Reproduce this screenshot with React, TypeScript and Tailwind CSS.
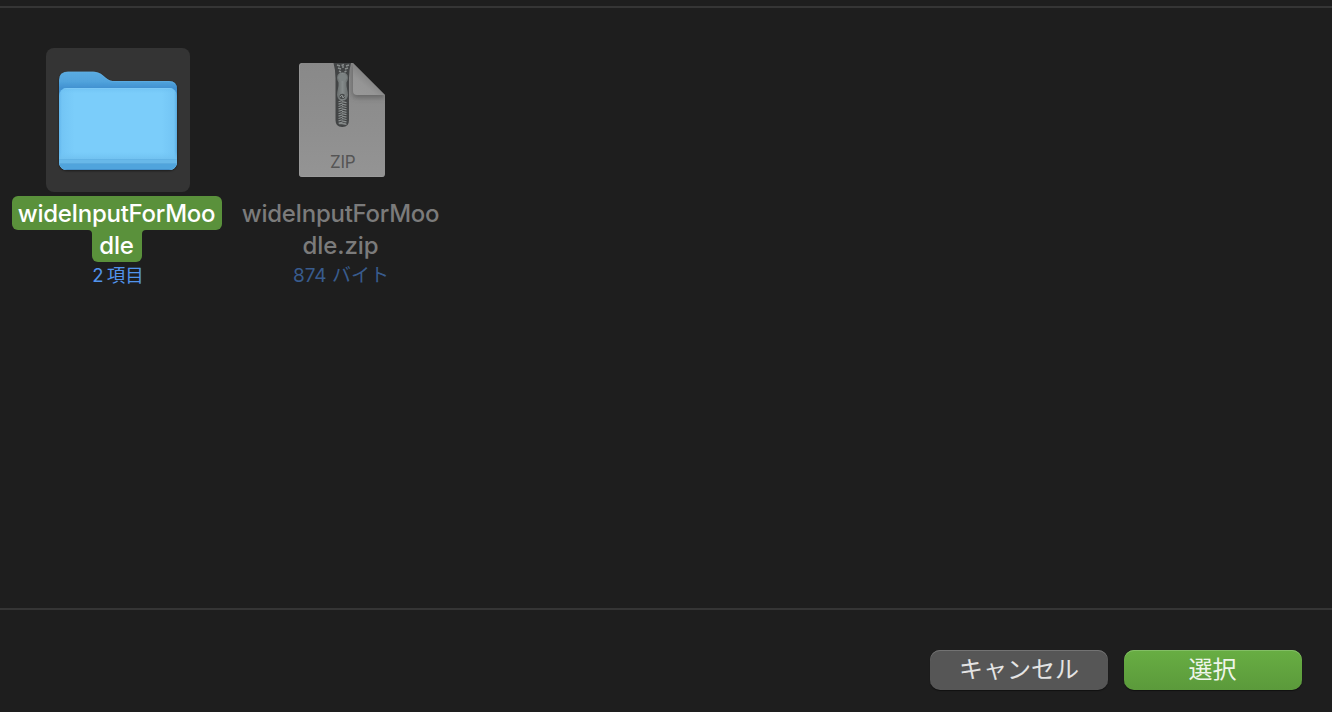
const teeth = Array.from({ length: 10 }, (_, i) => 52.5 + i * 2.4);

function FolderIcon() {
  return (
    <svg width="144" height="144" viewBox="0 0 144 144" className="block" aria-hidden="true">
      <defs>
        <linearGradient id="folderBack" x1="0" y1="23" x2="0" y2="44" gradientUnits="userSpaceOnUse">
          <stop offset="0" stopColor="#5bace1" />
          <stop offset="0.5" stopColor="#51a3dc" />
          <stop offset="0.8" stopColor="#4292d1" />
          <stop offset="1" stopColor="#4292d1" />
        </linearGradient>
        <linearGradient id="folderFront" x1="13" y1="0" x2="131" y2="0" gradientUnits="userSpaceOnUse">
          <stop offset="0" stopColor="#62b6ec" />
          <stop offset="0.025" stopColor="#73c5f5" />
          <stop offset="0.13" stopColor="#7bcdfa" />
          <stop offset="0.87" stopColor="#7bcdfa" />
          <stop offset="0.975" stopColor="#73c5f5" />
          <stop offset="1" stopColor="#58aadf" />
        </linearGradient>
        <linearGradient id="folderShade" x1="0" y1="39" x2="0" y2="122" gradientUnits="userSpaceOnUse">
          <stop offset="0" stopColor="#68b9ed" stopOpacity="0.7" />
          <stop offset="0.08" stopColor="#70c5f5" stopOpacity="0" />
          <stop offset="0.78" stopColor="#70c5f5" stopOpacity="0" />
          <stop offset="0.86" stopColor="#70c0ef" stopOpacity="0.8" />
          <stop offset="1" stopColor="#70c0ef" stopOpacity="1" />
        </linearGradient>
        <clipPath id="frontClip">
          <rect x="13" y="40" width="118" height="82" rx="8" />
        </clipPath>
        <filter id="folderShadow" x="-10%" y="-10%" width="120%" height="125%">
          <feDropShadow dx="0" dy="1" stdDeviation="1" floodColor="#000" floodOpacity="0.5" />
        </filter>
      </defs>
      <g filter="url(#folderShadow)">
        <path
          d="M13 32Q13 23.800 22 23.800H47C51 23.800 54 25 57 27.500L60 30C63 32.500 65 33 69 33H123Q131 33 131 41V113Q131 122 122 122H22Q13 122 13 113Z"
          fill="url(#folderBack)"
        />
      </g>
      <path d="M18 24.500Q20 24 22 24H47C51 24 54 25.500 57 28L60 30.500C63 33 65 33.500 69 33.500H123Q127 33.500 129 36" fill="none" stroke="#6ab5e5" strokeOpacity="0.4" />
      <g clipPath="url(#frontClip)">
        <rect x="13" y="40" width="118" height="82" fill="url(#folderFront)" />
        <rect x="13" y="40" width="118" height="82" fill="url(#folderShade)" />
        <rect x="13" y="111" width="118" height="1" fill="#62b3e5" />
        <rect x="13" y="112" width="118" height="3" fill="#68b8e8" />
        <rect x="13" y="115" width="118" height="1" fill="#5aaade" />
        <rect x="13" y="116" width="118" height="5" fill="#50a4dc" />
        <rect x="13" y="121" width="118" height="1" fill="#438fca" />
        <rect x="13" y="40" width="118" height="1" fill="#82cdf7" fillOpacity="0.65" />
      </g>
    </svg>
  );
}

function ZipIcon() {
  return (
    <svg width="144" height="144" viewBox="0 0 144 144" className="block" aria-hidden="true">
      <defs>
        <linearGradient id="paper" x1="0" y1="15" x2="0" y2="129" gradientUnits="userSpaceOnUse">
          <stop offset="0" stopColor="#898989" />
          <stop offset="0.5" stopColor="#8e8e8e" />
          <stop offset="1" stopColor="#949494" />
        </linearGradient>
        <linearGradient id="fold" x1="84" y1="46" x2="98" y2="29" gradientUnits="userSpaceOnUse">
          <stop offset="0" stopColor="#989898" />
          <stop offset="0.6" stopColor="#959595" />
          <stop offset="1" stopColor="#858585" />
        </linearGradient>
        <linearGradient id="pull" x1="67" y1="0" x2="78" y2="0" gradientUnits="userSpaceOnUse">
          <stop offset="0" stopColor="#686d6d" />
          <stop offset="0.5" stopColor="#858b8b" />
          <stop offset="1" stopColor="#686d6d" />
        </linearGradient>
        <clipPath id="paperClip">
          <path d="M32 15H83L115 47V126Q115 129 112 129H32Q29 129 29 126V18Q29 15 32 15Z" />
        </clipPath>
        <filter id="foldShadow" x="-40%" y="-40%" width="180%" height="180%">
          <feGaussianBlur stdDeviation="2.5" />
        </filter>
      </defs>
      <g clipPath="url(#paperClip)">
        <rect x="29" y="15" width="86" height="114" fill="url(#paper)" />
        <path d="M82 15V45Q82 50 88 50H115V47Z" fill="#505050" fillOpacity="0.6" filter="url(#foldShadow)" />
        <path d="M83 15V43Q83 47 87 47H115Z" fill="url(#fold)" />
        <path d="M29.500 128V18Q29.500 15.500 32 15.500M30 128.500H114" fill="none" stroke="#a0a0a0" strokeOpacity="0.5" />
        <path d="M63.500 15H81Q79 22 79 30V72Q79 79 72.500 79H72Q65.500 79 65.500 72V30Q65.500 22 63.500 15Z" fill="#424445" />
        <path
          d="M67 17L70 18M68 20L71 21M69 23L71 24M74 16.500L71.500 17.500M79 17L76 18M78 20L75 21M76.500 23L74.500 24M72 19L74 19"
          stroke="#878b8b"
          strokeWidth="1.500"
        />
        {teeth.map((y) => (
          <path key={y} d={`M68.500 ${y + 1.2}L72.500 ${y}M72 ${y + 1.2}L76.500 ${y + 2.2}`} fill="none" stroke="#8a8f8f" strokeWidth="1.200" />
        ))}
        <path d="M69 75.500H75.500" stroke="#858989" strokeWidth="1.500" />
        <path d="M67 30Q67 24.500 72.500 24.500Q78 24.500 78 30Q78 32.500 76.500 34.500C76 39 78 43 78 47Q77.500 52.500 72.500 52.500Q67.500 52.500 67 47C67 43 69 39 68.500 34.500Q67 32.500 67 30Z" fill="url(#pull)" />
        <path d="M68 30Q68 26 72.500 26Q77 26 77 30L75 33H70Z" fill="#7c8282" />
        <circle cx="72.300" cy="48.500" r="2.800" fill="#484b4b" />
        <path d="M70 49L72 47L73 50L75 47.500" fill="none" stroke="#8e9393" />
      </g>
      <text x="72.700" y="119.500" textAnchor="middle" fill="#555" fontFamily="Inter, sans-serif" fontSize="17" fontWeight="400" letterSpacing="-0.300">
        ZIP
      </text>
    </svg>
  );
}

function SelectedName() {
  return (
    <div className="flex flex-col items-center text-white">
      <div className="flex h-[34px] w-[210px] items-center justify-center rounded-md bg-[#5a913b]">
        <span className="whitespace-nowrap pt-[2px] pr-px tracking-[-0.28px]">wideInputForMoo</span>
      </div>
      <div className="flex h-8">
        <svg width="4" height="4" viewBox="0 0 4 4" aria-hidden="true">
          <path d="M0 0H4V4Q4 0 0 0Z" fill="#5a913b" />
        </svg>
        <div className="flex h-8 w-[50px] items-center justify-center rounded-b-md bg-[#5a913b] pr-px tracking-[-0.1px]">
          dle
        </div>
        <svg width="4" height="4" viewBox="0 0 4 4" aria-hidden="true">
          <path d="M4 0H0V4Q0 0 4 0Z" fill="#5a913b" />
        </svg>
      </div>
    </div>
  );
}

export default function App() {
  return (
    <div className="flex h-[712px] w-[1332px] flex-col overflow-hidden bg-[#1e1e1e] font-['Inter','Noto_Sans_CJK_JP',sans-serif]">
      <div className="h-2 border-b-2 border-[#353535]" />
      <main className="flex flex-1 items-start gap-[14px] pt-10 pl-3">
        <figure className="flex w-[210px] flex-col items-center text-[24px] font-medium leading-8">
          <div className="ml-[2px] h-36 w-36 rounded-lg bg-[#343434]">
            <FolderIcon />
          </div>
          <figcaption className="mt-1 flex flex-col items-center">
            <SelectedName />
            <span className="flex gap-[3px] pl-[2px] text-[18.5px] font-normal leading-[26px] text-[#5294ec]">
              <span>2</span>
              <span>項目</span>
            </span>
          </figcaption>
        </figure>
        <figure className="flex w-[210px] flex-col items-center text-[24px] font-medium leading-8">
          <div className="ml-[2px] h-36 w-36">
            <ZipIcon />
          </div>
          <figcaption className="mt-1 flex flex-col items-center text-[#7b7b7b]">
            <span className="h-[34px] pr-px leading-[36px] tracking-[-0.28px]">wideInputForMoo</span>
            <span className="h-8 pr-px leading-[32px] tracking-[-0.1px]">dle.zip</span>
            <span className="pt-px text-[19px] font-normal leading-[26px] text-[#385b8d]">874 バイト</span>
          </figcaption>
        </figure>
      </main>
      <footer className="flex h-[104px] items-start justify-end gap-4 border-t-2 border-[#353535] pt-10 pr-[30px] text-[24px]">
        <button className="flex h-10 w-[178px] items-center justify-center rounded-[10px] bg-[#565656] pb-px text-[#e4e4e4] shadow-[inset_0_1px_0_#737373,0_1px_1px_#101010]">
          キャンセル
        </button>
        <button className="flex h-10 w-[178px] items-center justify-center rounded-[10px] bg-linear-to-b from-[#68ae43] to-[#5b9a3b] pr-px pb-px text-[#eef5ea] shadow-[inset_0_1px_0_#83be65,0_1px_1px_#101010]">
          選択
        </button>
      </footer>
    </div>
  );
}
